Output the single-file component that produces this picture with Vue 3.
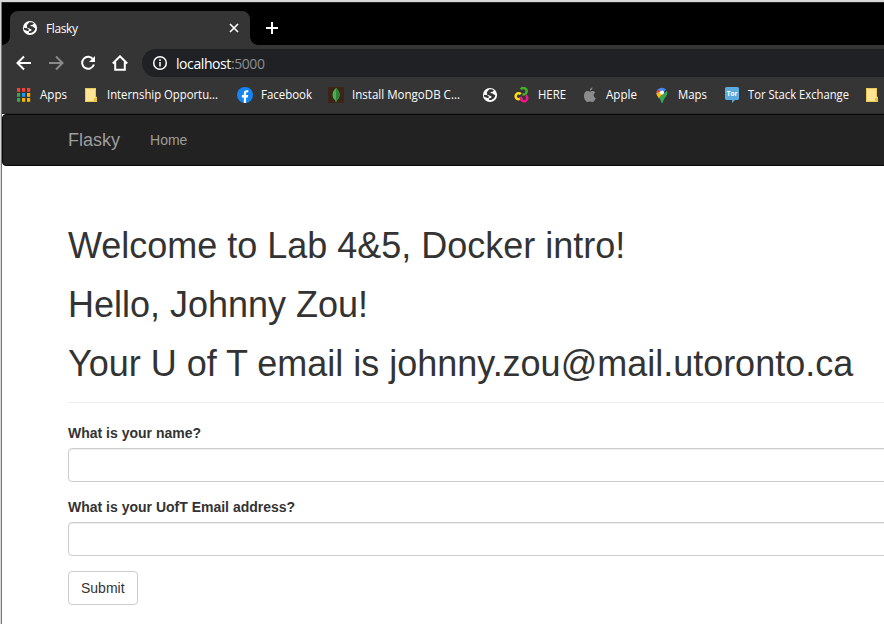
<script setup>
const bookmarks = [
  { icon: 'apps', label: 'Apps', width: 68, gap: 8, text: 27 },
  { icon: 'note', label: 'Internship Opportu...', width: 153, gap: 7, text: 111 },
  { icon: 'facebook', label: 'Facebook', width: 91, gap: 8, text: 51 },
  { icon: 'mongo', label: 'Install MongoDB C...', width: 154, gap: 8, text: 108 },
  { icon: 'globe', label: '', width: 32, gap: 0, text: 0 },
  { icon: 'here', label: 'HERE', width: 68, gap: 8, text: 28 },
  { icon: 'apple', label: 'Apple', width: 72, gap: 8, text: 31 },
  { icon: 'maps', label: 'Maps', width: 70, gap: 8, text: 29 },
  { icon: 'tor', label: 'Tor Stack Exchange', width: 141, gap: 8, text: 101 },
  { icon: 'note', label: '', width: 20, gap: 0, text: 0 },
]
const dots = ['#f44336', '#f44336', '#f44336', '#34a853', '#2196f3', '#fbb300', '#34a853', '#fbb300', '#fbb300']
const land = 'M7.300 2.300C9 1.900 10.800 2.500 12 3.500L10.500 4.700C9.500 4.900 8.500 5 8.300 6.100L10.800 6.400 12.200 7.800 13.300 8C13.200 10.500 11.200 12.500 9 13L7 13V11.600L9.300 10.700 9.500 9.400 7.500 8.500 5.200 7.800 4.800 5.300ZM1.800 7.700 5.500 8.200 7 9.700 6.200 11.200 4 10.500 2.200 9.800Z'
</script>

<template>
  <div class="screen">
    <div class="browser">
      <div class="tabstrip">
        <div class="tab">
          <svg class="favicon" viewBox="0 0 16 16"><circle cx="8" cy="8" r="7.1" fill="#fff" /><path :d="land" class="land" /></svg>
          <span class="tab-title">Flasky</span>
          <svg class="close" viewBox="0 0 10 10"><path d="m1 1 8 8M9 1 1 9" /></svg>
        </div>
        <svg class="plus" viewBox="0 0 12 12"><path d="M6 0v12M0 6h12" /></svg>
      </div>

      <div class="toolbar">
        <svg class="nav-icon" viewBox="0 0 16 16"><path d="M15 8H2M8 1.500 1.500 8 8 14.500" /></svg>
        <svg class="nav-icon dim" viewBox="0 0 16 16"><path d="M1 8h13M8 1.500 14.500 8 8 14.500" /></svg>
        <svg class="nav-icon" viewBox="0 0 16 16"><path d="M13.200 4.500A6 6 0 1 0 13.900 9.500" /><path d="M15 1v6H9z" class="solid" /></svg>
        <svg class="nav-icon" viewBox="0 0 16 16"><path d="M.8 8.500 8 1.300l7.200 7.200M3.200 7v7.800h9.600V7" /></svg>
        <div class="address">
          <svg class="info" viewBox="0 0 16 16"><circle cx="8" cy="8" r="6.300" /><path d="M8 7v4.500M8 4.200v1.700" /></svg>
          <span class="url">localhost<span class="port">:5000</span></span>
        </div>
      </div>

      <div class="bookmarks">
        <div v-for="(b, i) in bookmarks" :key="i" class="bookmark" :style="{ width: b.width + 'px', gap: b.gap + 'px' }">
          <svg class="bm-icon" viewBox="0 0 16 16">
            <g v-if="b.icon === 'apps'">
              <rect v-for="(c, n) in dots" :key="n" :x="1 + (n % 3) * 5" :y="1 + Math.floor(n / 3) * 5" width="3.2" height="3.8" :fill="c" />
            </g>
            <g v-else-if="b.icon === 'note'">
              <path d="M1 1h11v9h1v5H1z" fill="#ffe593" /><path d="M1.500 1.500h10V10h1v4.500h-11z" fill="none" stroke="#eac956" /><path d="M10 11h3v3.500h-3z" fill="#eac23f" />
            </g>
            <g v-else-if="b.icon === 'facebook'">
              <circle cx="8" cy="8" r="8" fill="#1385f5" /><path d="M6.800 16v-5.600H4.900V8h1.900V6.300c0-2 1.100-3.100 2.900-3.100l1.600.1v2h-1C9.300 5.300 9.100 5.900 9.100 6.500V8h2.100l-.4 2.400H9.100V16z" fill="#fff" />
            </g>
            <g v-else-if="b.icon === 'mongo'">
              <path d="M0 0h16v16H0z" fill="#3b2518" /><path d="M8 1c5.500 5 4 10 .5 12.500V15h-1v-1.500C4 11 3 5.500 8 1z" fill="#4caf50" /><path d="M8 1c5.500 5 4 10 0 12.500z" fill="#2e8537" />
            </g>
            <g v-else-if="b.icon === 'globe'">
              <circle cx="8" cy="8" r="7.1" fill="#fff" /><path :d="land" class="land" />
            </g>
            <g v-else-if="b.icon === 'here'" fill="none" stroke-width="2.500">
              <path d="M6.800 2.400A3.200 3.200 0 1 1 8.500 7.300" stroke="#43b02a" /><path d="M6.800 7.200A3 3 0 1 0 4.500 12.300L8 10.800" stroke="#ffdd18" /><path d="M7.200 10A3.100 3.100 0 1 0 11.800 8.600" stroke="#ed1688" />
            </g>
            <path v-else-if="b.icon === 'apple'" d="M10.500.6c.1 1.500-1.100 3-2.600 3C7.700 2.200 9 .8 10.500.6zM8 4.700c.8 0 1.500-.7 2.700-.7 1.100 0 2 .6 2.600 1.400-2.500 1.500-1.900 4.700.5 5.600-.8 2-1.900 4-3.400 4-.9 0-1.200-.6-2.300-.6s-1.500.6-2.300.6C3.800 15 1.900 11.800 1.900 8.700 1.900 5.700 3.700 4 5.600 4c1 0 1.800.7 2.400.7z" fill="#8b8b8b" />
            <g v-else-if="b.icon === 'maps'">
              <path d="M2.500 5.800c0 2 1.200 3.700 2.500 5.200L12 2.500A5.500 5.500 0 0 0 2.500 5.800z" fill="#4285f4" /><path d="M2.500 6.500A5.500 5.500 0 0 1 3.800 2.300L7 5z" fill="#ea4335" /><path d="M2.500 6c0 2 1.200 3.700 2.500 5.200L9.500 6 7 4.500z" fill="#fbbc04" /><path d="M13 3.700c1.300 3.800-1.200 5.800-2.700 8L8.500 16H7.500c-.4-2-1.200-3.500-2.500-5z" fill="#34a853" /><circle cx="8" cy="5.600" r="2.100" fill="#fff" />
            </g>
            <g v-else-if="b.icon === 'tor'">
              <path d="M2.500 0h11a1.500 1.500 0 0 1 1.500 1.500v10a1.500 1.500 0 0 1-1.500 1.500H11l-3 3v-3H2.500A1.500 1.500 0 0 1 1 11.500v-10A1.500 1.500 0 0 1 2.500 0z" fill="#5caade" /><text x="8" y="9" text-anchor="middle" class="tor-text">Tor</text>
            </g>
          </svg>
          <svg v-if="b.label" class="bm-label" :width="b.text" height="16"><text x="0" y="12" :textLength="b.text" lengthAdjust="spacingAndGlyphs">{{ b.label }}</text></svg>
        </div>
      </div>

      <div class="page">
        <nav class="navbar">
          <a class="brand">Flasky</a>
          <a class="link">Home</a>
        </nav>
        <main class="content">
          <h1>Welcome to Lab 4&amp;5, Docker intro!</h1>
          <h1>Hello, Johnny Zou!</h1>
          <h1>Your U of T email is johnny.zou@mail.utoronto.ca</h1>
          <hr />
          <form @submit.prevent>
            <div class="group">
              <label for="name">What is your name?</label>
              <input id="name" type="text" />
            </div>
            <div class="group">
              <label for="email">What is your UofT Email address?</label>
              <input id="email" type="text" />
            </div>
            <button type="submit">Submit</button>
          </form>
        </main>
      </div>
    </div>
  </div>
</template>

<style>
body { overflow: hidden; }
</style>

<style scoped>
* { box-sizing: border-box; }
.screen { width: 884px; height: 624px; padding: 2px 0 0 1px; background: #d7d7d7; overflow: hidden; }
.browser { width: 883px; height: 622px; border-left: 1px solid #777; background: #fff; overflow: hidden; }
.tabstrip { height: 43px; padding: 8px 0 0 8px; display: flex; background: #000; border-top: 1px solid #252525; }
.tab { position: relative; width: 240px; height: 34px; display: flex; align-items: center; padding: 0 11px 0 12px; border-radius: 8px 8px 0 0; background: #353535; }
.tab::before, .tab::after { content: ''; position: absolute; bottom: 0; width: 8px; height: 8px; }
.tab::before { left: -8px; background: radial-gradient(circle at 0 0, #000 7.5px, #353535 8px); }
.tab::after { right: -8px; background: radial-gradient(circle at 100% 0, #000 7.5px, #353535 8px); }
.favicon { width: 16px; height: 16px; }
.land { fill: #353535; }
.tab-title { margin-left: 8px; font: 12px 'Open Sans', sans-serif; letter-spacing: -.4px; color: #fff; }
.close { width: 10px; height: 10px; margin-left: auto; fill: none; stroke: #fff; stroke-width: 1.6; }
.plus { width: 12px; height: 12px; margin: 11px 0 0 16px; stroke: #fff; stroke-width: 2; }
.toolbar { height: 36px; display: flex; align-items: center; gap: 16px; padding-left: 14px; background: #353535; }
.nav-icon { flex: none; width: 16px; height: 16px; fill: none; stroke: #fff; stroke-width: 2; }
.dim { stroke: #8a8a8a; }
.solid { fill: #fff; stroke: none; }
.address { flex: 1; height: 28px; margin-left: -2px; padding-left: 10px; display: flex; align-items: center; border-radius: 14px 0 0 14px; background: #202124; }
.info { width: 16px; height: 16px; fill: none; stroke: #fff; stroke-width: 1.5; }
.url { margin-left: 8px; font: 14px 'Open Sans', sans-serif; letter-spacing: -.42px; color: #fff; }
.port { color: #8d8e90; }
.bookmarks { height: 33px; display: flex; padding: 0 0 5px 14px; align-items: center; background: #353535; border-bottom: 1px solid #2a2a2a; }
.bookmark { flex: none; display: flex; align-items: center; }
.bm-icon { flex: none; width: 16px; height: 16px; }
.bm-label { flex: none; overflow: visible; fill: #fff; font: 12.4px 'Open Sans', sans-serif; }
.tor-text { font: bold 6.5px 'Open Sans', sans-serif; fill: #fff; }
.page { height: 510px; font: 14px/20px 'Liberation Sans', Arial, sans-serif; color: #333; }
.navbar { width: 1000px; height: 52px; padding-left: 65px; display: flex; align-items: center; gap: 30px; border: 1px solid #080808; border-radius: 4px; background: #222; color: #9d9d9d; }
.brand { font-size: 18px; }
.content { width: 1100px; padding: 60px 0 0 66px; }
h1 { margin: 0 0 20px; font-size: 36px; font-weight: 500; line-height: 39px; letter-spacing: -.01px; }
hr { margin: -1px 0 20px; border: 0; border-top: 1px solid #eee; }
.group { margin-bottom: 15px; }
label { display: block; margin-bottom: 5px; font-weight: 700; }
input { display: block; width: 100%; height: 34px; border: 1px solid #ccc; border-radius: 4px; background: #fff; box-shadow: inset 0 1px 1px rgba(0, 0, 0, .075); }
button { height: 34px; padding: 6px 12px; border: 1px solid #ccc; border-radius: 4px; background: #fff; color: #333; font: 14px/20px 'Liberation Sans', Arial, sans-serif; }
</style>
